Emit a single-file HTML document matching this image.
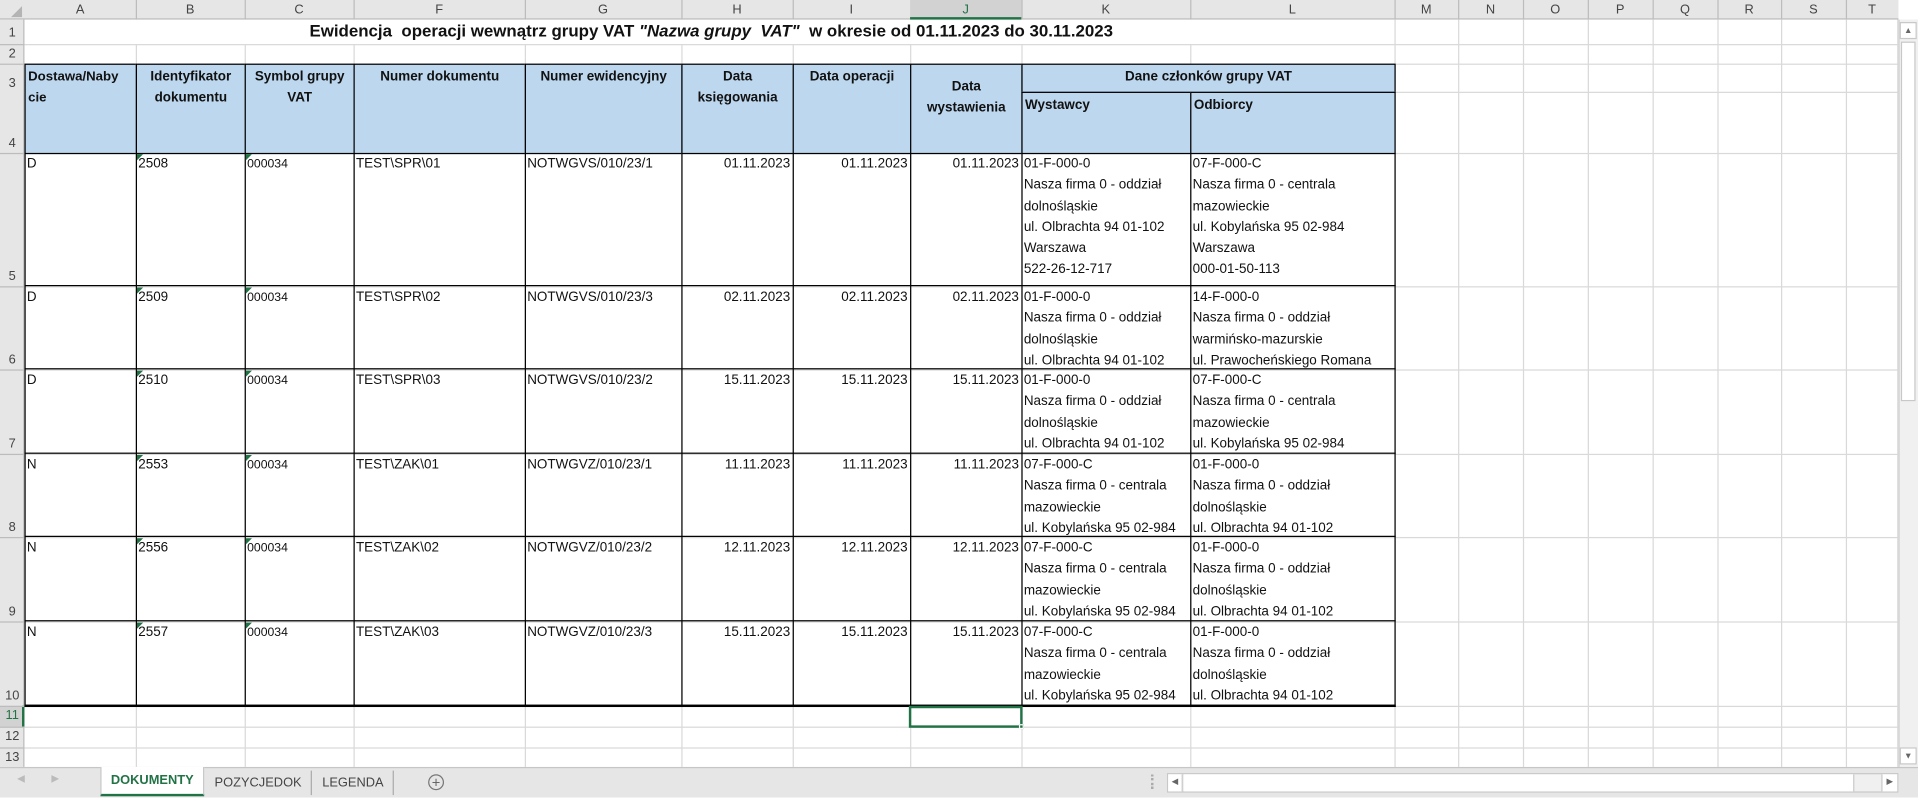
<!DOCTYPE html>
<html><head><meta charset="utf-8"><style>
html,body{margin:0;padding:0;width:1918px;height:798px;overflow:hidden;background:#fff}
#w{position:absolute;left:0;top:0;width:1568px;height:652px;transform:scale(1.22321);transform-origin:0 0;font-family:"Liberation Sans",Arial,sans-serif;color:#111}
.a{position:absolute;box-sizing:border-box}
.vl{position:absolute;width:1px;background:#d9d9d9}
.hl{position:absolute;height:1px;background:#d9d9d9}
.ch{position:absolute;top:0;height:16px;font-size:10.5px;line-height:16px;text-align:center;color:#444}
.rh{position:absolute;left:0;width:20px;font-size:10.5px;color:#444;text-align:center}
.c{position:absolute;box-sizing:border-box;font-size:11px;line-height:17.3px;padding:1px 2px;white-space:nowrap;overflow:hidden}
.hd{position:absolute;box-sizing:border-box;background:#bdd7ee;font-size:11px;font-weight:bold;line-height:17px;padding:2px 2px;text-align:center;white-space:nowrap}
.r{text-align:right}
.tri{position:absolute;width:0;height:0;border-top:5px solid #217346;border-right:5px solid transparent}
</style></head><body><div id="w">
<div class="a" style="left:0;top:0;width:1552px;height:16px;background:#e6e6e6;border-bottom:1px solid #bcbcbc"></div>
<div class="a" style="left:0;top:16px;width:20px;height:611px;background:#e6e6e6;border-right:1px solid #bcbcbc"></div>
<div class="a" style="left:744px;top:0;width:91px;height:16px;background:#d2d2d2;border-bottom:2px solid #217346"></div>
<div class="a" style="left:0;top:577px;width:20px;height:17px;background:#d2d2d2;border-right:2px solid #217346"></div>
<div class="a" style="left:0;top:0;width:20px;height:16px"><div style="position:absolute;right:2px;bottom:2px;width:0;height:0;border-left:9px solid transparent;border-bottom:9px solid #b4b4b4"></div></div>

<div class="ch" style="left:20px;width:91px">A</div>
<div class="ch" style="left:111px;width:89px">B</div>
<div class="ch" style="left:200px;width:89px">C</div>
<div class="ch" style="left:289px;width:140px">F</div>
<div class="ch" style="left:429px;width:128px">G</div>
<div class="ch" style="left:557px;width:91px">H</div>
<div class="ch" style="left:648px;width:96px">I</div>
<div class="ch" style="left:744px;width:91px;color:#217346">J</div>
<div class="ch" style="left:835px;width:138px">K</div>
<div class="ch" style="left:973px;width:167px">L</div>
<div class="ch" style="left:1140px;width:52px">M</div>
<div class="ch" style="left:1192px;width:53px">N</div>
<div class="ch" style="left:1245px;width:53px">O</div>
<div class="ch" style="left:1298px;width:53px">P</div>
<div class="ch" style="left:1351px;width:53px">Q</div>
<div class="ch" style="left:1404px;width:52px">R</div>
<div class="ch" style="left:1456px;width:53px">S</div>
<div class="ch" style="left:1509px;width:43px">T</div>

<div class="vl" style="left:111px;top:0;height:16px;background:#bcbcbc"></div>
<div class="vl" style="left:200px;top:0;height:16px;background:#bcbcbc"></div>
<div class="vl" style="left:289px;top:0;height:16px;background:#bcbcbc"></div>
<div class="vl" style="left:429px;top:0;height:16px;background:#bcbcbc"></div>
<div class="vl" style="left:557px;top:0;height:16px;background:#bcbcbc"></div>
<div class="vl" style="left:648px;top:0;height:16px;background:#bcbcbc"></div>
<div class="vl" style="left:835px;top:0;height:16px;background:#bcbcbc"></div>
<div class="vl" style="left:973px;top:0;height:16px;background:#bcbcbc"></div>
<div class="vl" style="left:1140px;top:0;height:16px;background:#bcbcbc"></div>
<div class="vl" style="left:1192px;top:0;height:16px;background:#bcbcbc"></div>
<div class="vl" style="left:1245px;top:0;height:16px;background:#bcbcbc"></div>
<div class="vl" style="left:1298px;top:0;height:16px;background:#bcbcbc"></div>
<div class="vl" style="left:1351px;top:0;height:16px;background:#bcbcbc"></div>
<div class="vl" style="left:1404px;top:0;height:16px;background:#bcbcbc"></div>
<div class="vl" style="left:1456px;top:0;height:16px;background:#bcbcbc"></div>
<div class="vl" style="left:1509px;top:0;height:16px;background:#bcbcbc"></div>

<div class="rh" style="top:21px">1</div>
<div class="rh" style="top:38px">2</div>
<div class="rh" style="top:62px">3</div>
<div class="rh" style="top:111px">4</div>
<div class="rh" style="top:220px">5</div>
<div class="rh" style="top:288px">6</div>
<div class="rh" style="top:357px">7</div>
<div class="rh" style="top:425px">8</div>
<div class="rh" style="top:494px">9</div>
<div class="rh" style="top:563px">10</div>
<div class="rh" style="top:579px;color:#217346">11</div>
<div class="rh" style="top:596px">12</div>
<div class="rh" style="top:613px">13</div>
<div class="hl" style="left:0;top:36px;width:20px;background:#bcbcbc"></div>
<div class="hl" style="left:0;top:52px;width:20px;background:#bcbcbc"></div>
<div class="hl" style="left:0;top:125px;width:20px;background:#bcbcbc"></div>
<div class="hl" style="left:0;top:234px;width:20px;background:#bcbcbc"></div>
<div class="hl" style="left:0;top:302px;width:20px;background:#bcbcbc"></div>
<div class="hl" style="left:0;top:371px;width:20px;background:#bcbcbc"></div>
<div class="hl" style="left:0;top:439px;width:20px;background:#bcbcbc"></div>
<div class="hl" style="left:0;top:508px;width:20px;background:#bcbcbc"></div>
<div class="hl" style="left:0;top:577px;width:20px;background:#bcbcbc"></div>
<div class="hl" style="left:0;top:594px;width:20px;background:#bcbcbc"></div>
<div class="hl" style="left:0;top:611px;width:20px;background:#bcbcbc"></div>

<div class="vl" style="left:111px;top:36px;height:591px"></div>
<div class="vl" style="left:200px;top:36px;height:591px"></div>
<div class="vl" style="left:289px;top:36px;height:591px"></div>
<div class="vl" style="left:429px;top:36px;height:591px"></div>
<div class="vl" style="left:557px;top:36px;height:591px"></div>
<div class="vl" style="left:648px;top:36px;height:591px"></div>
<div class="vl" style="left:744px;top:36px;height:591px"></div>
<div class="vl" style="left:835px;top:36px;height:591px"></div>
<div class="vl" style="left:973px;top:36px;height:591px"></div>
<div class="vl" style="left:1140px;top:16px;height:611px"></div>
<div class="vl" style="left:1192px;top:16px;height:611px"></div>
<div class="vl" style="left:1245px;top:16px;height:611px"></div>
<div class="vl" style="left:1298px;top:16px;height:611px"></div>
<div class="vl" style="left:1351px;top:16px;height:611px"></div>
<div class="vl" style="left:1404px;top:16px;height:611px"></div>
<div class="vl" style="left:1456px;top:16px;height:611px"></div>
<div class="vl" style="left:1509px;top:16px;height:611px"></div>
<div class="vl" style="left:1551px;top:16px;height:611px"></div>
<div class="hl" style="left:20px;top:36px;width:1532px"></div>
<div class="hl" style="left:20px;top:52px;width:1532px"></div>
<div class="hl" style="left:20px;top:75px;width:1532px"></div>
<div class="hl" style="left:20px;top:125px;width:1532px"></div>
<div class="hl" style="left:20px;top:234px;width:1532px"></div>
<div class="hl" style="left:20px;top:302px;width:1532px"></div>
<div class="hl" style="left:20px;top:371px;width:1532px"></div>
<div class="hl" style="left:20px;top:439px;width:1532px"></div>
<div class="hl" style="left:20px;top:508px;width:1532px"></div>
<div class="hl" style="left:20px;top:577px;width:1532px"></div>
<div class="hl" style="left:20px;top:594px;width:1532px"></div>
<div class="hl" style="left:20px;top:611px;width:1532px"></div>

<div class="a" style="left:253px;top:16px;width:700px;height:20px;font-size:13.8px;font-weight:bold;line-height:20px;white-space:nowrap">Ewidencja&nbsp; operacji wewnątrz grupy VAT <i>"Nazwa grupy&nbsp; VAT"</i>&nbsp; w okresie od 01.11.2023 do 30.11.2023</div>

<div class="hd" style="left:20px;top:52px;width:92px;height:74px;text-align:left;border:1px solid #000;font-size:10.8px">Dostawa/Naby<br>cie</div>
<div class="hd" style="left:111px;top:52px;width:90px;height:74px;border:1px solid #000">Identyfikator<br>dokumentu</div>
<div class="hd" style="left:200px;top:52px;width:90px;height:74px;border:1px solid #000">Symbol grupy<br>VAT</div>
<div class="hd" style="left:289px;top:52px;width:141px;height:74px;border:1px solid #000">Numer dokumentu</div>
<div class="hd" style="left:429px;top:52px;width:129px;height:74px;border:1px solid #000">Numer ewidencyjny</div>
<div class="hd" style="left:557px;top:52px;width:92px;height:74px;border:1px solid #000">Data<br>księgowania</div>
<div class="hd" style="left:648px;top:52px;width:97px;height:74px;border:1px solid #000">Data operacji</div>
<div class="hd" style="left:744px;top:52px;width:92px;height:74px;border:1px solid #000;padding-top:10px">Data<br>wystawienia</div>
<div class="hd" style="left:835px;top:52px;width:306px;height:24px;border:1px solid #000">Dane członków grupy VAT</div>
<div class="hd" style="left:835px;top:75px;width:139px;height:51px;text-align:left;border:1px solid #000">Wystawcy</div>
<div class="hd" style="left:973px;top:75px;width:168px;height:51px;text-align:left;border:1px solid #000">Odbiorcy</div>

<div class="a" style="left:20px;top:125px;width:1121px;height:453px;border:1px solid #000;border-top:none"></div>
<div class="a" style="left:20px;top:233px;width:1121px;height:1px;background:#000"></div>
<div class="a" style="left:20px;top:301px;width:1121px;height:1px;background:#000"></div>
<div class="a" style="left:20px;top:370px;width:1121px;height:1px;background:#000"></div>
<div class="a" style="left:20px;top:438px;width:1121px;height:1px;background:#000"></div>
<div class="a" style="left:20px;top:507px;width:1121px;height:1px;background:#000"></div>
<div class="a" style="left:20px;top:576px;width:1121px;height:2px;background:#000"></div>
<div class="a" style="left:111px;top:125px;width:1px;height:452px;background:#000"></div>
<div class="a" style="left:200px;top:125px;width:1px;height:452px;background:#000"></div>
<div class="a" style="left:289px;top:125px;width:1px;height:452px;background:#000"></div>
<div class="a" style="left:429px;top:125px;width:1px;height:452px;background:#000"></div>
<div class="a" style="left:557px;top:125px;width:1px;height:452px;background:#000"></div>
<div class="a" style="left:648px;top:125px;width:1px;height:452px;background:#000"></div>
<div class="a" style="left:744px;top:125px;width:1px;height:452px;background:#000"></div>
<div class="a" style="left:835px;top:125px;width:1px;height:452px;background:#000"></div>
<div class="a" style="left:973px;top:125px;width:1px;height:452px;background:#000"></div>

<div class="c" style="left:20px;top:125px;width:91px">D</div>
<div class="c" style="left:111px;top:125px;width:89px">2508</div>
<div class="c" style="left:200px;top:125px;width:89px;font-size:10px">000034</div>
<div class="c" style="left:289px;top:125px;width:140px">TEST\SPR\01</div>
<div class="c" style="left:429px;top:125px;width:128px">NOTWGVS/010/23/1</div>
<div class="c r" style="left:557px;top:125px;width:91px">01.11.2023</div>
<div class="c r" style="left:648px;top:125px;width:96px">01.11.2023</div>
<div class="c r" style="left:744px;top:125px;width:91px">01.11.2023</div>
<div class="c" style="left:835px;top:125px;width:138px">01-F-000-0<br>Nasza firma 0 - oddział<br>dolnośląskie<br>ul. Olbrachta 94 01-102<br>Warszawa<br>522-26-12-717</div>
<div class="c" style="left:973px;top:125px;width:167px">07-F-000-C<br>Nasza firma 0 - centrala<br>mazowieckie<br>ul. Kobylańska 95 02-984<br>Warszawa<br>000-01-50-113</div>

<div class="c" style="left:20px;top:234px;width:91px">D</div>
<div class="c" style="left:111px;top:234px;width:89px">2509</div>
<div class="c" style="left:200px;top:234px;width:89px;font-size:10px">000034</div>
<div class="c" style="left:289px;top:234px;width:140px">TEST\SPR\02</div>
<div class="c" style="left:429px;top:234px;width:128px">NOTWGVS/010/23/3</div>
<div class="c r" style="left:557px;top:234px;width:91px">02.11.2023</div>
<div class="c r" style="left:648px;top:234px;width:96px">02.11.2023</div>
<div class="c r" style="left:744px;top:234px;width:91px">02.11.2023</div>
<div class="c" style="left:835px;top:234px;width:138px">01-F-000-0<br>Nasza firma 0 - oddział<br>dolnośląskie<br>ul. Olbrachta 94 01-102</div>
<div class="c" style="left:973px;top:234px;width:167px">14-F-000-0<br>Nasza firma 0 - oddział<br>warmińsko-mazurskie<br>ul. Prawocheńskiego Romana</div>

<div class="c" style="left:20px;top:302px;width:91px">D</div>
<div class="c" style="left:111px;top:302px;width:89px">2510</div>
<div class="c" style="left:200px;top:302px;width:89px;font-size:10px">000034</div>
<div class="c" style="left:289px;top:302px;width:140px">TEST\SPR\03</div>
<div class="c" style="left:429px;top:302px;width:128px">NOTWGVS/010/23/2</div>
<div class="c r" style="left:557px;top:302px;width:91px">15.11.2023</div>
<div class="c r" style="left:648px;top:302px;width:96px">15.11.2023</div>
<div class="c r" style="left:744px;top:302px;width:91px">15.11.2023</div>
<div class="c" style="left:835px;top:302px;width:138px">01-F-000-0<br>Nasza firma 0 - oddział<br>dolnośląskie<br>ul. Olbrachta 94 01-102</div>
<div class="c" style="left:973px;top:302px;width:167px">07-F-000-C<br>Nasza firma 0 - centrala<br>mazowieckie<br>ul. Kobylańska 95 02-984</div>

<div class="c" style="left:20px;top:371px;width:91px">N</div>
<div class="c" style="left:111px;top:371px;width:89px">2553</div>
<div class="c" style="left:200px;top:371px;width:89px;font-size:10px">000034</div>
<div class="c" style="left:289px;top:371px;width:140px">TEST\ZAK\01</div>
<div class="c" style="left:429px;top:371px;width:128px">NOTWGVZ/010/23/1</div>
<div class="c r" style="left:557px;top:371px;width:91px">11.11.2023</div>
<div class="c r" style="left:648px;top:371px;width:96px">11.11.2023</div>
<div class="c r" style="left:744px;top:371px;width:91px">11.11.2023</div>
<div class="c" style="left:835px;top:371px;width:138px">07-F-000-C<br>Nasza firma 0 - centrala<br>mazowieckie<br>ul. Kobylańska 95 02-984</div>
<div class="c" style="left:973px;top:371px;width:167px">01-F-000-0<br>Nasza firma 0 - oddział<br>dolnośląskie<br>ul. Olbrachta 94 01-102</div>

<div class="c" style="left:20px;top:439px;width:91px">N</div>
<div class="c" style="left:111px;top:439px;width:89px">2556</div>
<div class="c" style="left:200px;top:439px;width:89px;font-size:10px">000034</div>
<div class="c" style="left:289px;top:439px;width:140px">TEST\ZAK\02</div>
<div class="c" style="left:429px;top:439px;width:128px">NOTWGVZ/010/23/2</div>
<div class="c r" style="left:557px;top:439px;width:91px">12.11.2023</div>
<div class="c r" style="left:648px;top:439px;width:96px">12.11.2023</div>
<div class="c r" style="left:744px;top:439px;width:91px">12.11.2023</div>
<div class="c" style="left:835px;top:439px;width:138px">07-F-000-C<br>Nasza firma 0 - centrala<br>mazowieckie<br>ul. Kobylańska 95 02-984</div>
<div class="c" style="left:973px;top:439px;width:167px">01-F-000-0<br>Nasza firma 0 - oddział<br>dolnośląskie<br>ul. Olbrachta 94 01-102</div>

<div class="c" style="left:20px;top:508px;width:91px">N</div>
<div class="c" style="left:111px;top:508px;width:89px">2557</div>
<div class="c" style="left:200px;top:508px;width:89px;font-size:10px">000034</div>
<div class="c" style="left:289px;top:508px;width:140px">TEST\ZAK\03</div>
<div class="c" style="left:429px;top:508px;width:128px">NOTWGVZ/010/23/3</div>
<div class="c r" style="left:557px;top:508px;width:91px">15.11.2023</div>
<div class="c r" style="left:648px;top:508px;width:96px">15.11.2023</div>
<div class="c r" style="left:744px;top:508px;width:91px">15.11.2023</div>
<div class="c" style="left:835px;top:508px;width:138px">07-F-000-C<br>Nasza firma 0 - centrala<br>mazowieckie<br>ul. Kobylańska 95 02-984</div>
<div class="c" style="left:973px;top:508px;width:167px">01-F-000-0<br>Nasza firma 0 - oddział<br>dolnośląskie<br>ul. Olbrachta 94 01-102</div>

<div class="tri" style="left:112px;top:126px"></div><div class="tri" style="left:201px;top:126px"></div>
<div class="tri" style="left:112px;top:235px"></div><div class="tri" style="left:201px;top:235px"></div>
<div class="tri" style="left:112px;top:303px"></div><div class="tri" style="left:201px;top:303px"></div>
<div class="tri" style="left:112px;top:372px"></div><div class="tri" style="left:201px;top:372px"></div>
<div class="tri" style="left:112px;top:440px"></div><div class="tri" style="left:201px;top:440px"></div>
<div class="tri" style="left:112px;top:509px"></div><div class="tri" style="left:201px;top:509px"></div>

<div class="a" style="left:743px;top:577px;width:93px;height:18px;border:2px solid #217346"></div>
<div class="a" style="left:833px;top:592px;width:4px;height:4px;background:#217346;border:1px solid #fff"></div>

<div class="a" style="left:1552px;top:16px;width:16px;height:611px;background:#f0f0f0;border-left:1px solid #d0d0d0"></div>
<div class="a" style="left:1553px;top:18px;width:14px;height:14px;background:#fff;border:1px solid #c8c8c8;font-size:7px;color:#666;text-align:center;line-height:13px">▲</div>
<div class="a" style="left:1554px;top:34px;width:12px;height:294px;background:#fff;border:1px solid #c8c8c8"></div>
<div class="a" style="left:1553px;top:611px;width:14px;height:14px;background:#fff;border:1px solid #c8c8c8;font-size:7px;color:#666;text-align:center;line-height:13px">▼</div>

<div class="a" style="left:0;top:627px;width:1568px;height:25px;background:#e6e6e6;border-top:1px solid #c6c6c6"></div>
<div class="a" style="left:14px;top:632px;font-size:8px;color:#bbb">◀</div>
<div class="a" style="left:42px;top:632px;font-size:8px;color:#bbb">▶</div>
<div class="a" style="left:82px;top:627px;width:85px;height:24px;background:#fff;border-bottom:2px solid #217346;border-left:1px solid #c6c6c6;border-right:1px solid #c6c6c6;font-size:10.5px;font-weight:bold;color:#217346;text-align:center;line-height:23px">DOKUMENTY</div>
<div class="a" style="left:168px;top:630px;width:87px;height:20px;font-size:10.5px;color:#444;text-align:center;line-height:20px;border-right:1px solid #aaa">POZYCJEDOK</div>
<div class="a" style="left:256px;top:630px;width:66px;height:20px;font-size:10.5px;color:#444;text-align:center;line-height:20px;border-right:1px solid #aaa">LEGENDA</div>
<div class="a" style="left:350px;top:633px;width:13px;height:13px;border:1px solid #777;border-radius:50%;font-size:12px;line-height:12px;text-align:center;color:#666">+</div>
<div class="a" style="left:941px;top:633px;width:2px;height:12px;border-left:2px dotted #aaa"></div>
<div class="a" style="left:954px;top:632px;width:598px;height:16px;background:#f0f0f0;border:1px solid #c8c8c8"></div>
<div class="a" style="left:955px;top:633px;width:12px;height:14px;background:#fff;border-right:1px solid #c8c8c8;font-size:7px;color:#666;text-align:center;line-height:14px">◀</div>
<div class="a" style="left:968px;top:633px;width:548px;height:14px;background:#fff;border-right:1px solid #c8c8c8"></div>
<div class="a" style="left:1538px;top:633px;width:13px;height:14px;background:#fff;border-left:1px solid #c8c8c8;font-size:7px;color:#666;text-align:center;line-height:14px">▶</div>
</div></body></html>
